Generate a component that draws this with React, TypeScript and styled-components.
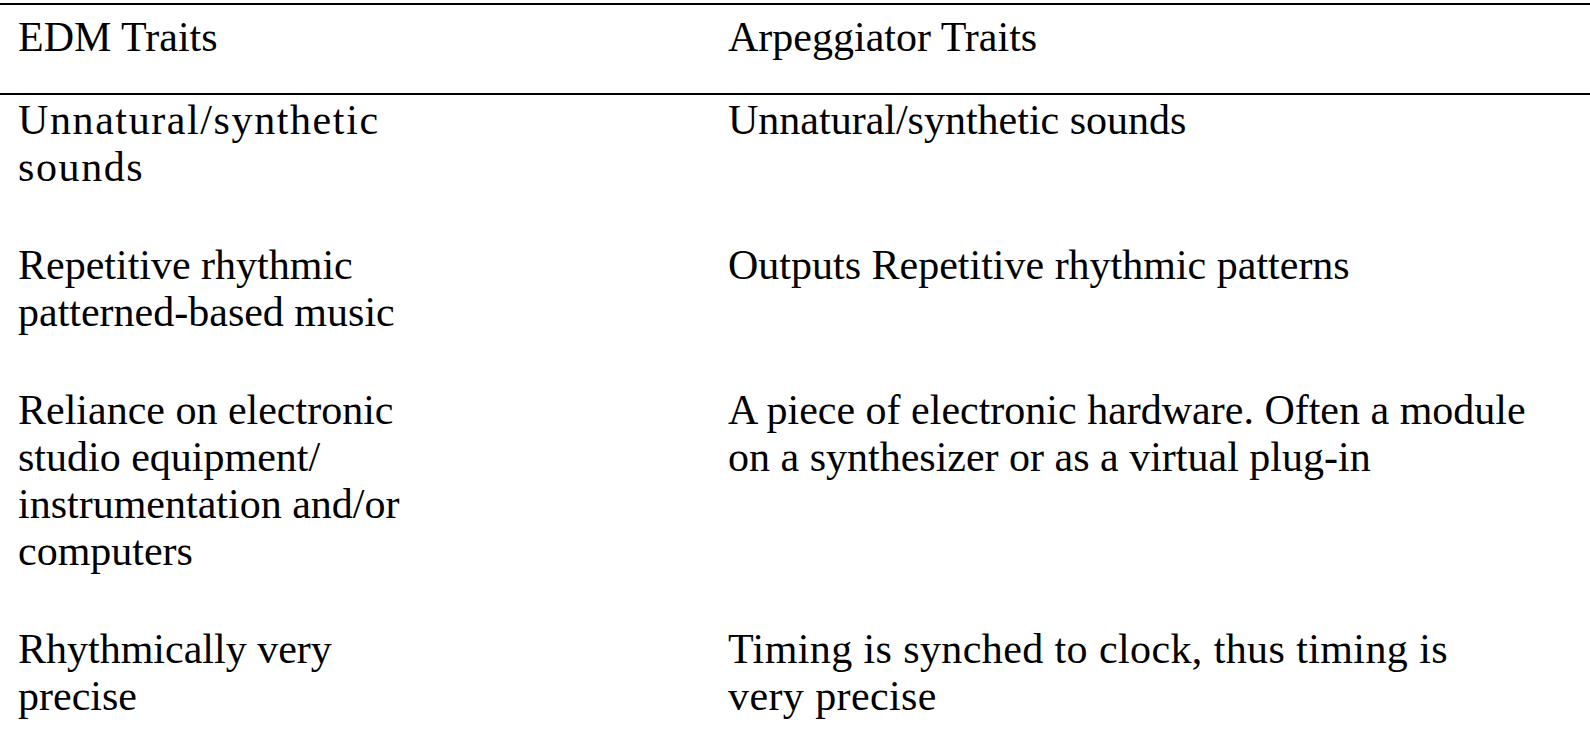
import React from "react";
import styled, { createGlobalStyle } from "styled-components";

const Global = createGlobalStyle`
  html, body { margin: 0; padding: 0; background: #fff; }
  body { font-family: "Liberation Serif", "Times New Roman", serif; color: #000; }
`;

const Table = styled.div`
  margin-top: 3px;
  width: 100%;
  display: flex;
  flex-direction: column;
`;

const Row = styled.div<{ $head?: boolean }>`
  display: grid;
  grid-template-columns: 710px 1fr;
  border-top: ${(p) => (p.$head ? "2px solid #000" : "none")};
  border-bottom: ${(p) => (p.$head ? "2px solid #000" : "none")};
  padding: ${(p) => (p.$head ? "9px 0 32px" : "2px 0 49px")};
`;

const Cell = styled.div<{ $wide?: boolean; $spacing?: number }>`
  padding-left: 18px;
  max-width: ${(p) => (p.$wide ? "800px" : "400px")};
  font-size: 42px;
  line-height: 47px;
  letter-spacing: ${(p) => p.$spacing ?? 0}px;
`;

type RowData = { left: string; right: string; leftSpacing?: number; rightSpacing?: number };

const rows: RowData[] = [
  { left: "Unnatural/synthetic sounds", right: "Unnatural/synthetic sounds", leftSpacing: 1.6 },
  { left: "Repetitive rhythmic patterned-based music", right: "Outputs Repetitive rhythmic patterns" },
  {
    left: "Reliance on electronic studio equipment/ instrumentation and/or computers",
    right: "A piece of electronic hardware. Often a module on a synthesizer or as a virtual plug-in",
  },
  {
    left: "Rhythmically very precise",
    right: "Timing is synched to clock, thus timing is very precise",
    rightSpacing: 0.4,
  },
];

export default function App() {
  return (
    <>
      <Global />
      <Table>
        <Row $head>
          <Cell>EDM Traits</Cell>
          <Cell $wide>Arpeggiator Traits</Cell>
        </Row>
        {rows.map((r, i) => (
          <Row key={i}>
            <Cell $spacing={r.leftSpacing}>{r.left}</Cell>
            <Cell $wide $spacing={r.rightSpacing}>{r.right}</Cell>
          </Row>
        ))}
      </Table>
    </>
  );
}
